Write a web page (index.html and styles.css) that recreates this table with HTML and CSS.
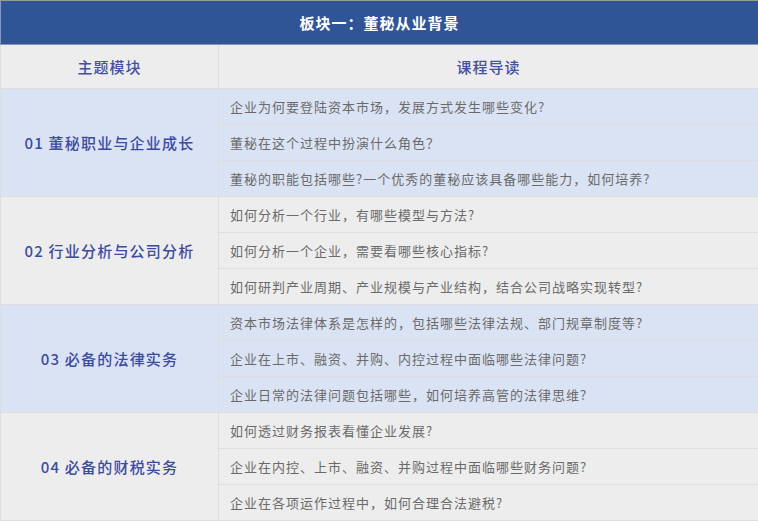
FILE: index.html
```html
<!DOCTYPE html>
<html lang="zh-CN">
<head>
<meta charset="utf-8">
<title>板块一：董秘从业背景</title>
<link rel="stylesheet" href="styles.css">
</head>
<body>
<table class="course">
  <colgroup><col class="c-left"><col class="c-right"></colgroup>
  <thead>
    <tr class="title-row"><th colspan="2">板块一：董秘从业背景</th></tr>
    <tr class="head-row"><th>主题模块</th><th>课程导读</th></tr>
  </thead>
  <tbody class="grp blue">
    <tr><td class="topic" rowspan="3">01 董秘职业与企业成长</td><td class="q">企业为何要登陆资本市场，发展方式发生哪些变化?</td></tr>
    <tr><td class="q">董秘在这个过程中扮演什么角色？</td></tr>
    <tr><td class="q">董秘的职能包括哪些?一个优秀的董秘应该具备哪些能力，如何培养?</td></tr>
  </tbody>
  <tbody class="grp gray">
    <tr><td class="topic" rowspan="3">02 行业分析与公司分析</td><td class="q">如何分析一个行业，有哪些模型与方法?</td></tr>
    <tr><td class="q">如何分析一个企业，需要看哪些核心指标?</td></tr>
    <tr><td class="q">如何研判产业周期、产业规模与产业结构，结合公司战略实现转型?</td></tr>
  </tbody>
  <tbody class="grp blue">
    <tr><td class="topic" rowspan="3">03 必备的法律实务</td><td class="q">资本市场法律体系是怎样的，包括哪些法律法规、部门规章制度等?</td></tr>
    <tr><td class="q">企业在上市、融资、并购、内控过程中面临哪些法律问题?</td></tr>
    <tr><td class="q">企业日常的法律问题包括哪些，如何培养高管的法律思维?</td></tr>
  </tbody>
  <tbody class="grp gray">
    <tr><td class="topic" rowspan="3">04 必备的财税实务</td><td class="q">如何透过财务报表看懂企业发展?</td></tr>
    <tr><td class="q">企业在内控、上市、融资、并购过程中面临哪些财务问题?</td></tr>
    <tr><td class="q">企业在各项运作过程中，如何合理合法避税?</td></tr>
  </tbody>
</table>
</body>
</html>
```
FILE: styles.css
```css
html, body {
  margin: 0;
  padding: 0;
  background: #ffffff;
}
body {
  font-family: "Noto Sans CJK SC", "Noto Sans", sans-serif;
}
.course {
  border-collapse: collapse;
  table-layout: fixed;
  width: 758px;
  border-top: 1px solid #9a9a9a;
}
.c-left { width: 218px; }
.c-right { width: 540px; }

.course th,
.course td {
  padding: 0;
  border: 1px solid #dedede;
}
.title-row th {
  height: 43px;
  background: #2f5597;
  color: #ffffff;
  font-size: 15px;
  font-weight: 700;
  letter-spacing: 1px;
  text-align: center;
  border: 1px solid #8797b4;
  border-top: 0;
}
.head-row th {
  height: 43px;
  background: #ededed;
  color: #4350a3;
  font-size: 15px;
  font-weight: 500;
  letter-spacing: 1px;
  text-align: center;
}
.grp.blue td { background: #dae3f3; }
.grp.gray td { background: #ededed; }
.topic {
  color: #3d4b9f;
  font-size: 15px;
  font-weight: 500;
  letter-spacing: 1.2px;
  text-align: center;
}
.q {
  height: 35px;
  padding-left: 11px !important;
  color: #6a6a6a;
  font-size: 13px;
  letter-spacing: 1px;
  white-space: nowrap;
}
```
